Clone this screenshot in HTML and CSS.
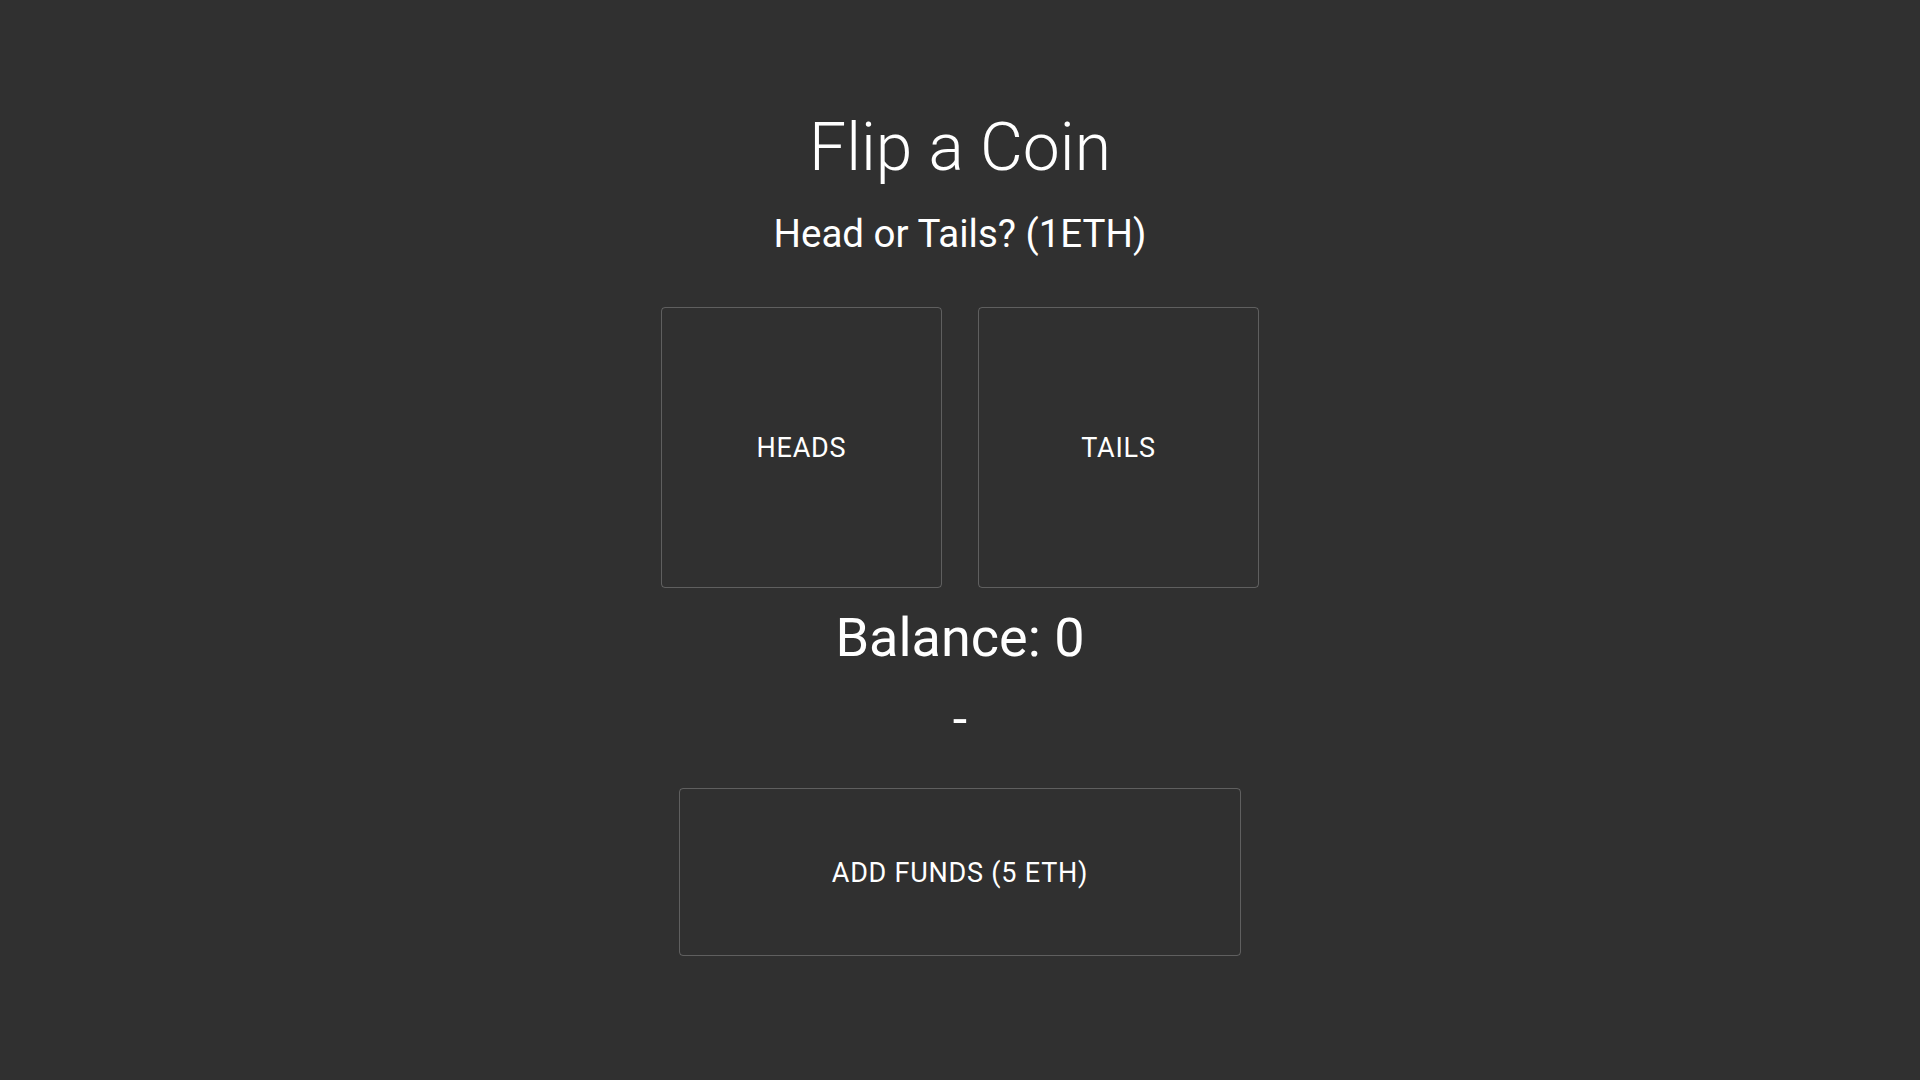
FILE: index.html
```html
<!DOCTYPE html>
<html>
<head>
<meta charset="utf-8">
<link rel="stylesheet" href="styles.css">
</head>
<body>
<main class="app">
  <h1 class="title">Flip a Coin</h1>
  <h2 class="subtitle">Head or Tails? (1ETH)</h2>
  <div class="choices">
    <button class="btn choice">HEADS</button>
    <button class="btn choice">TAILS</button>
  </div>
  <div class="balance">Balance: 0</div>
  <div class="result">-</div>
  <button class="btn funds">ADD FUNDS (5 ETH)</button>
</main>
</body>
</html>
```
FILE: styles.css
```css
html, body {
  margin: 0;
  padding: 0;
  background: #303030;
  height: 100%;
}
body {
  font-family: Roboto, "Liberation Sans", sans-serif;
  color: #fff;
}
.app {
  display: flex;
  flex-direction: column;
  align-items: center;
  padding-top: 108px;
}
.title {
  margin: 0;
  font-size: 66px;
  font-weight: 300;
  line-height: 80px;
}
.subtitle {
  margin: 24px 0 0;
  font-size: 38.5px;
  font-weight: 400;
  line-height: 44px;
}
.choices {
  display: flex;
  gap: 36px;
  margin-top: 51px;
}
.btn {
  background: transparent;
  border: 1px solid rgba(255, 255, 255, 0.23);
  border-radius: 4px;
  color: #fff;
  font-family: Roboto, "Liberation Sans", sans-serif;
  font-size: 27px;
  font-weight: 400;
  letter-spacing: 0.02857em;
  padding: 0;
  box-sizing: border-box;
  display: flex;
  align-items: center;
  justify-content: center;
}
.choice {
  width: 281px;
  height: 281px;
}
.balance {
  margin-top: 19px;
  font-size: 54px;
  line-height: 62px;
}
.result {
  margin-top: 20px;
  font-size: 52px;
  line-height: 62px;
}
.funds {
  margin-top: 37px;
  width: 562px;
  height: 168px;
  padding-top: 2px;
}
```
